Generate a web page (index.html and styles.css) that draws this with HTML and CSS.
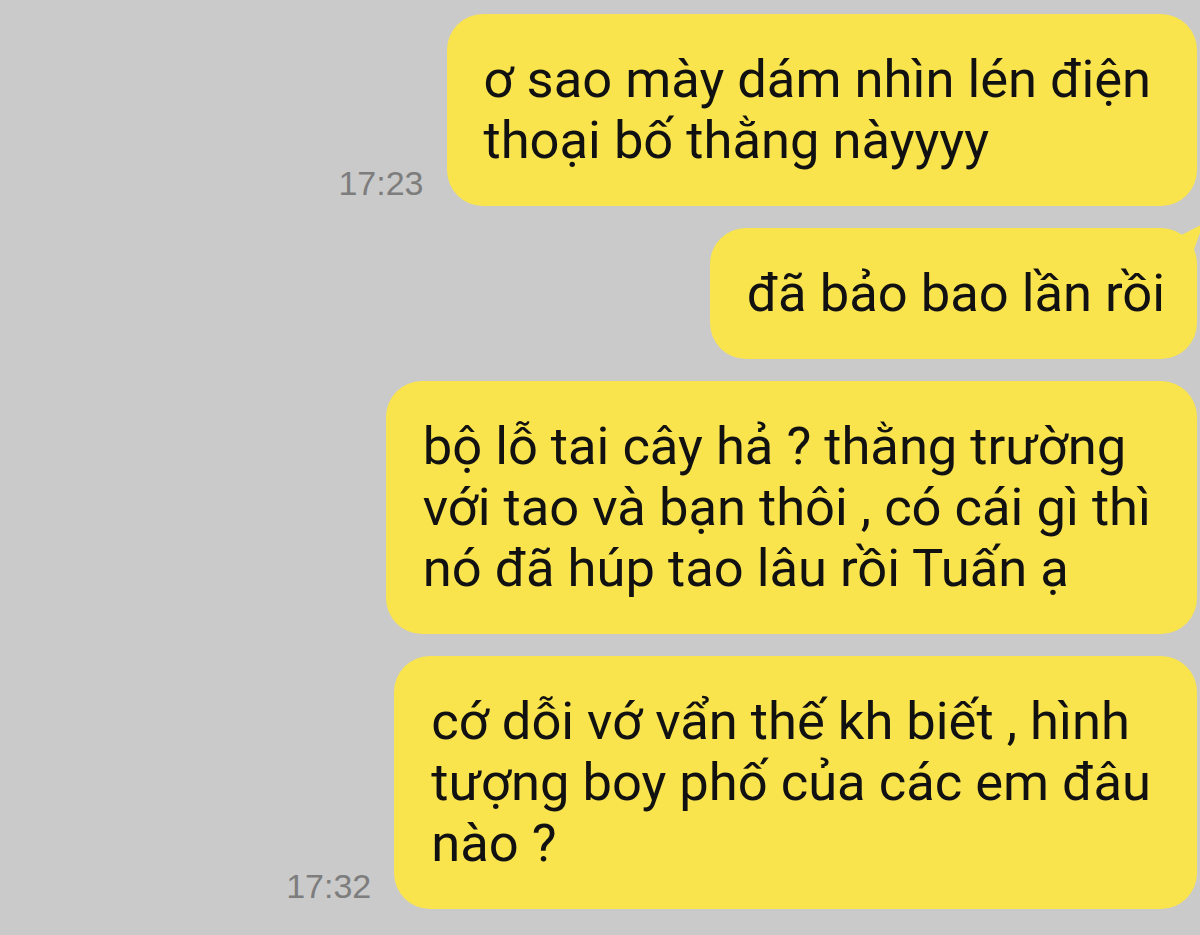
FILE: index.html
```html
<!DOCTYPE html>
<html lang="vi">
<head>
    <meta charset="UTF-8">
    <meta name="viewport" content="width=device-width, initial-scale=1.0">
    <title>Chat</title>
    <link rel="stylesheet" href="styles.css">
</head>
<body>

    <!-- Conversation -->
    <div class="chat">
        <div class="row">
            <span class="time">17:23</span>
            <div class="bubble">ơ sao mày dám nhìn lén điện<br>thoại bố thằng nàyyyy</div>
        </div>

        <div class="row">
            <div class="bubble tail">đã bảo bao lần rồi</div>
        </div>

        <div class="row">
            <div class="bubble">bộ lỗ tai cây hả ? thằng trường<br>với tao và bạn thôi , có cái gì thì<br>nó đã húp tao lâu rồi Tuấn ạ</div>
        </div>

        <div class="row">
            <span class="time">17:32</span>
            <div class="bubble">cớ dỗi vớ vẩn thế kh biết , hình<br>tượng boy phố của các em đâu<br>nào ?</div>
        </div>
    </div>

</body>
</html>
```

FILE: styles.css
```css
/* Reset */
* { margin: 0; padding: 0; box-sizing: border-box; }
body { font-family: Roboto, 'Liberation Sans', Arial, sans-serif; background-color: #cacaca; color: #111; overflow: hidden; }

/* Chat list */
.chat { display: flex; flex-direction: column; align-items: flex-end; gap: 22px; padding: 14px 3px 0 0; }
.row { display: flex; align-items: flex-end; gap: 23px; }

/* Bubbles */
.bubble { position: relative; background-color: #f9e44e; border-radius: 36px; padding: 35px 46px 35px 37px; font-size: 52.5px; line-height: 61px; white-space: nowrap; }
.bubble.tail { padding-right: 32px; }
.bubble.tail::after { content: ''; position: absolute; top: -4px; right: -6px; width: 30px; height: 34px; background-color: #f9e44e; clip-path: polygon(100% 0, 0 45%, 60% 100%); }

/* Timestamp */
.time { font-family: 'Liberation Sans', Arial, sans-serif; font-size: 34px; line-height: 34px; color: #7d7d7d; margin-bottom: 6px; }
```
